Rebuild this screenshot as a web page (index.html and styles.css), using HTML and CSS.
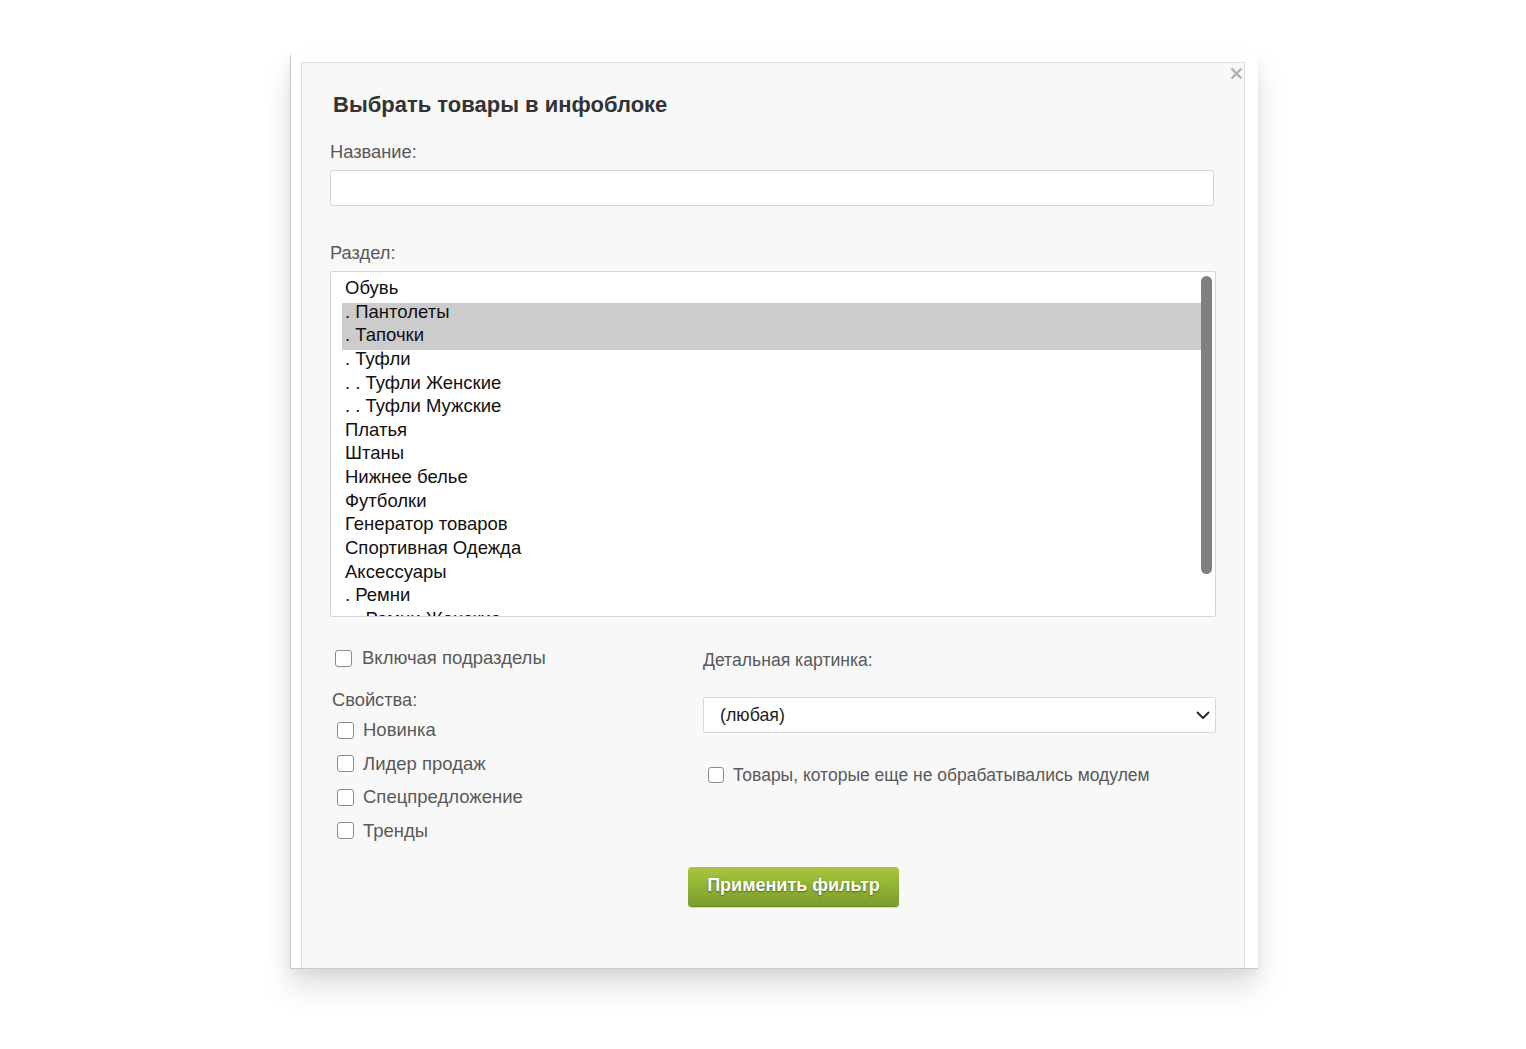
FILE: index.html
```html
<!DOCTYPE html>
<html lang="ru">
<head>
<meta charset="utf-8">
<title>Выбрать товары в инфоблоке</title>
<link rel="stylesheet" href="styles.css">
</head>
<body>
<div class="stage">
  <div class="window">
    <div class="panel">
      <span class="close" aria-label="close">
        <svg width="13" height="13" viewBox="0 0 13 13"><path d="M1.5 1.5 L11.5 11.5 M11.5 1.5 L1.5 11.5" stroke="#b0b0b0" stroke-width="2.4" stroke-linecap="butt"/></svg>
      </span>
      <h1 class="title">Выбрать товары в инфоблоке</h1>
      <div class="label label-name">Название:</div>
      <div class="input"></div>
      <div class="label label-section">Раздел:</div>
      <div class="listbox">
        <div class="list">
          <div class="item">Обувь</div>
          <div class="item sel">. Пантолеты</div>
          <div class="item sel">. Тапочки</div>
          <div class="item">. Туфли</div>
          <div class="item">. . Туфли Женские</div>
          <div class="item">. . Туфли Мужские</div>
          <div class="item">Платья</div>
          <div class="item">Штаны</div>
          <div class="item">Нижнее белье</div>
          <div class="item">Футболки</div>
          <div class="item">Генератор товаров</div>
          <div class="item">Спортивная Одежда</div>
          <div class="item">Аксессуары</div>
          <div class="item">. Ремни</div>
          <div class="item">. . Ремни Женские</div>
          <div class="item">. . Ремни Мужские</div>
        </div>
        <div class="thumb"></div>
      </div>
      <div class="bottom">
        <div class="col-left">
          <label class="check check-sub"><span class="box"></span><span class="ctext">Включая подразделы</span></label>
          <div class="label label-props">Свойства:</div>
          <div class="props">
            <label class="check check-prop"><span class="box"></span><span class="ctext">Новинка</span></label>
            <label class="check check-prop"><span class="box"></span><span class="ctext">Лидер продаж</span></label>
            <label class="check check-prop"><span class="box"></span><span class="ctext">Спецпредложение</span></label>
            <label class="check check-prop"><span class="box"></span><span class="ctext">Тренды</span></label>
          </div>
        </div>
        <div class="col-right">
          <div class="label label-pic">Детальная картинка:</div>
          <div class="select">
            <span class="select-value">(любая)</span>
            <svg class="chevron" width="14" height="9" viewBox="0 0 14 9"><path d="M1.5 1.5 L7 7 L12.5 1.5" fill="none" stroke="#222" stroke-width="1.8" stroke-linecap="round" stroke-linejoin="round"/></svg>
          </div>
          <label class="check check-module"><span class="box"></span><span class="ctext">Товары, которые еще не обрабатывались модулем</span></label>
        </div>
      </div>
      <div class="actions">
        <button class="btn" type="button">Применить фильтр</button>
      </div>
    </div>
  </div>
</div>
</body>
</html>
```

FILE: styles.css
```css
* { box-sizing: border-box; }

html, body {
  margin: 0;
  padding: 0;
  background: #ffffff;
  font-family: "Liberation Sans", Arial, sans-serif;
}

.stage {
  padding: 55px 0 0 290px;
  height: 1049px;
  overflow: hidden;
}

.window {
  width: 968px;
  height: 914px;
  background: #ffffff;
  border-left: 1px solid #c9c9c9;
  border-bottom: 1px solid #c9c9c9;
  padding: 7px 13px 0 10px;
  box-shadow: 0 18px 28px rgba(0, 0, 0, 0.13), 0 4px 10px rgba(0, 0, 0, 0.05);
}

.panel {
  position: relative;
  width: 944px;
  height: 906px;
  background: #f8f8f8;
  border: 1px solid #dedede;
  border-bottom: none;
  padding: 29px 28px 0 28px;
}

.close {
  position: absolute;
  top: 4px;
  right: 1px;
  width: 13px;
  height: 13px;
  display: block;
  line-height: 0;
}

.title {
  margin: 0 0 0 3px;
  font-size: 22px;
  line-height: 26px;
  font-weight: bold;
  color: #333333;
}

.label {
  font-size: 18.3px;
  line-height: 20px;
  color: #595959;
}

.label-name { margin-top: 24px; }

.input {
  margin-top: 8px;
  width: 884px;
  height: 36px;
  background: #ffffff;
  border: 1px solid #d3d6db;
  border-radius: 3px;
}

.label-section { margin-top: 37px; }

.listbox {
  position: relative;
  margin-top: 8px;
  width: 886px;
  height: 346px;
  background: #ffffff;
  border: 1px solid #d3d6db;
  border-radius: 2px;
  overflow: hidden;
  padding: 7px 11px 0 11px;
}

.list {
  width: 863px;
}

.item {
  font-size: 18.5px;
  line-height: 18.65px;
  height: 23.65px;
  padding-bottom: 5px;
  color: #111111;
  padding-left: 3px;
  white-space: nowrap;
}

.item.sel {
  background: #cccccc;
}

.thumb {
  position: absolute;
  top: 4px;
  left: 870px;
  width: 11px;
  height: 298px;
  border-radius: 6px;
  background: #808080;
}

.bottom {
  display: flex;
}

.col-left {
  width: 374px;
  display: flex;
  flex-direction: column;
}

.col-right {
  width: 513px;
  display: flex;
  flex-direction: column;
}

.check {
  display: flex;
  align-items: center;
  height: 20px;
  font-size: 18.5px;
  color: #595959;
}

.box {
  width: 17px;
  height: 17px;
  border: 1.5px solid #8c8c8c;
  border-radius: 3px;
  background: #ffffff;
  flex: none;
}

.ctext {
  white-space: nowrap;
  line-height: 20px;
}

.check-sub {
  margin-top: 31px;
  margin-left: 5px;
}
.check-sub .ctext { margin-left: 10px; }

.label-props {
  margin-top: 22px;
  margin-left: 2px;
}

.props {
  margin-top: 10px;
  display: flex;
  flex-direction: column;
  gap: 13.5px;
}

.check-prop { margin-left: 7px; }
.check-prop .ctext { margin-left: 9px; }

.label-pic {
  margin-top: 33px;
  font-size: 17.6px;
}

.select {
  margin-top: 27px;
  width: 513px;
  height: 36px;
  background: #ffffff;
  border: 1px solid #d8d8d8;
  border-radius: 2px;
  display: flex;
  align-items: center;
  justify-content: space-between;
  padding: 0 5px 0 16px;
}

.select-value {
  font-size: 17.8px;
  color: #1e1e1e;
}

.chevron { display: block; }

.check-module {
  margin-top: 32px;
  margin-left: 5px;
  font-size: 17.5px;
}
.check-module .box { width: 16px; height: 16px; }
.check-module .ctext { margin-left: 9px; }

.actions {
  margin-top: 26px;
  padding-left: 358px;
}

.btn {
  display: block;
  width: 211px;
  height: 40px;
  border: none;
  border-bottom: 1px solid #6b8b22;
  border-radius: 4px;
  background: linear-gradient(to bottom, #a9c63f 0%, #93b534 45%, #7b9d2b 100%);
  color: #ffffff;
  font-family: "Liberation Sans", Arial, sans-serif;
  font-size: 18px;
  font-weight: bold;
  text-shadow: 0 1px 2px rgba(0, 0, 0, 0.45);
  padding: 0 0 2px 0;
  cursor: pointer;
  box-shadow: 0 1px 1px rgba(0, 0, 0, 0.15);
}
```
